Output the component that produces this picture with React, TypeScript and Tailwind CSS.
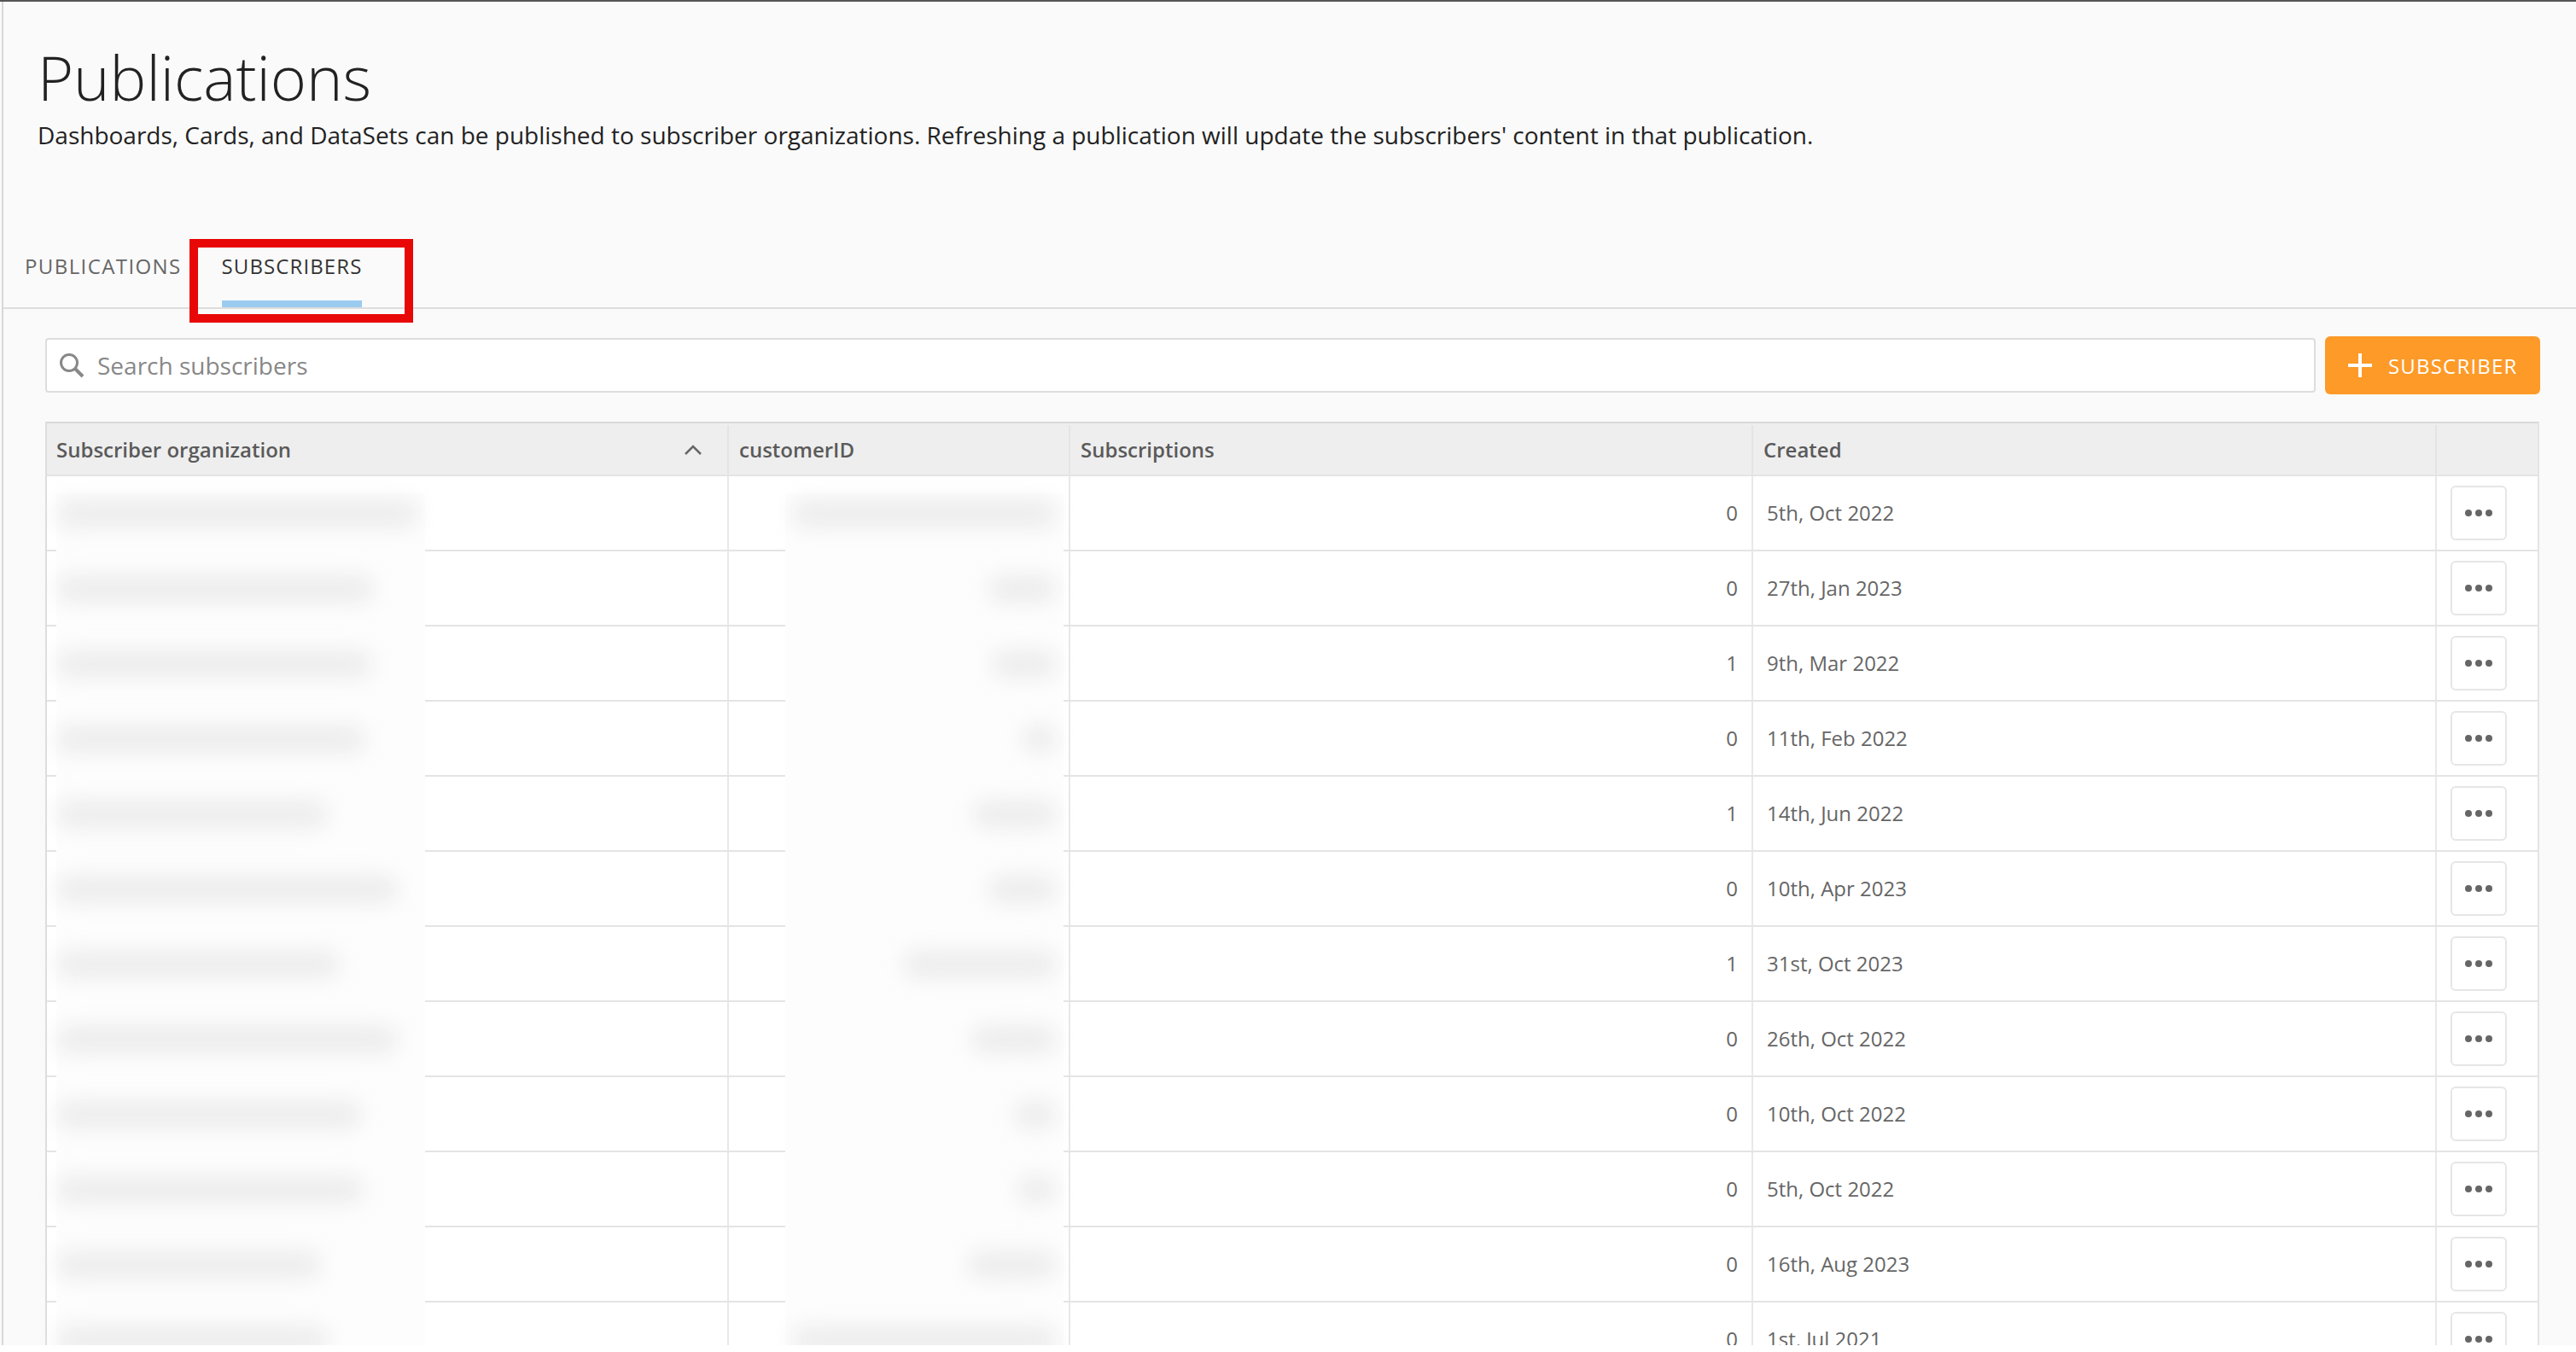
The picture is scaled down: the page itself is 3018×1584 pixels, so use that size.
const rows = [
  { n: 0, d: "5th, Oct 2022", org: 424, id: 310 },
  { n: 0, d: "27th, Jan 2023", org: 372, id: 80 },
  { n: 1, d: "9th, Mar 2022", org: 370, id: 76 },
  { n: 0, d: "11th, Feb 2022", org: 362, id: 40 },
  { n: 1, d: "14th, Jun 2022", org: 318, id: 98 },
  { n: 0, d: "10th, Apr 2023", org: 400, id: 80 },
  { n: 1, d: "31st, Oct 2023", org: 332, id: 180 },
  { n: 0, d: "26th, Oct 2022", org: 400, id: 100 },
  { n: 0, d: "10th, Oct 2022", org: 358, id: 50 },
  { n: 0, d: "5th, Oct 2022", org: 360, id: 46 },
  { n: 0, d: "16th, Aug 2023", org: 310, id: 104 },
  { n: 0, d: "1st, Jul 2021", org: 318, id: 310 },
];

function Row({ n, d }: { n: number; d: string }) {
  return (
    <div className="flex h-[88px] shrink-0 border-b-2 border-[#e4e4e4] bg-white text-[24px] text-[#666]">
      <div className="w-[799px] shrink-0 border-r-2 border-[#e8e8e8]" />
      <div className="w-[400px] shrink-0 border-r-2 border-[#e8e8e8]" />
      <div className="flex w-[800px] shrink-0 items-center justify-end border-r-2 border-[#e8e8e8] pr-[16px]">{n}</div>
      <div className="flex w-[801px] shrink-0 items-center border-r-2 border-[#e8e8e8] pl-[16px]">{d}</div>
      <div className="flex w-[118px] shrink-0 items-center pl-[16px]">
        <button className="flex h-[64px] w-[66px] items-center justify-center gap-[4px] rounded-[6px] border-2 border-[#e6e6e6] bg-white">
          <span className="h-[8px] w-[8px] rounded-full bg-[#666]" />
          <span className="h-[8px] w-[8px] rounded-full bg-[#666]" />
          <span className="h-[8px] w-[8px] rounded-full bg-[#666]" />
        </button>
      </div>
    </div>
  );
}

export default function App() {
  return (
    <div className="h-[1584px] overflow-hidden bg-white font-['Open_Sans',sans-serif]">
      <div className="h-[1576px] overflow-hidden border-t-2 border-t-[#555] bg-[#fafafa]">
        <div className="ml-[2px] h-full border-l-2 border-l-[#d8d8d8]">
          <div className="pl-[40px] pt-[44px]">
            <h1 className="mb-[5px] text-[72px] leading-[88px] font-light text-[#222]">Publications</h1>
            <p className="text-[28px] leading-[38px] text-[#222]">
              Dashboards, Cards, and DataSets can be published to subscriber organizations. Refreshing a publication will update the subscribers' content in that publication.
            </p>
          </div>
          <div className="relative mt-[105px] flex h-[80px] border-b-2 border-[#ddd] text-[24px] font-medium">
            <div className="ml-[25px] pt-[12px] tracking-[1.4px] text-[#666]">PUBLICATIONS</div>
            <div className="ml-[47px] h-[78px] border-b-8 border-[#9ccbf0] pt-[12px] tracking-[1.1px] text-[#333]">SUBSCRIBERS</div>
            <div className="absolute left-[218px] top-[-2px] h-[98px] w-[262px] border-[10px] border-[#e80808]" />
          </div>
          <div className="mt-[32px] flex items-center pl-[49px]">
            <div className="flex h-[64px] w-[2660px] items-center rounded-[4px] border-2 border-[#ddd] bg-white pl-[14px] text-[28px] text-[#888]">
              <svg width="30" height="30" viewBox="0 0 30 30" fill="none" stroke="#888" strokeWidth="3">
                <circle cx="12" cy="12" r="9.5" />
                <path d="M19 19l9 9" strokeWidth="4" />
              </svg>
              <span className="ml-[15px]">Search subscribers</span>
            </div>
            <button className="ml-[11px] flex h-[68px] w-[252px] items-center rounded-[6px] bg-[#fd9a28] pl-[27px] text-[24px] tracking-[1.2px] text-white">
              <svg width="28" height="28" viewBox="0 0 28 28" stroke="#fff" strokeWidth="4">
                <path d="M14 0v28M0 14h28" />
              </svg>
              <span className="ml-[19px] pt-[2px]">SUBSCRIBER</span>
            </button>
          </div>
          <div className="relative ml-[49px] mt-[32px] w-[2922px] border-l-2 border-r-2 border-t-2 border-l-[#ddd] border-r-[#e4e4e4] border-t-[#d8d8d8]">
            <div className="flex h-[62px] border-b-2 border-[#e4e4e4] bg-[#eee] pt-[2px] text-[24px] font-semibold text-[#5a5a5a]">
              <div className="flex w-[799px] shrink-0 items-center justify-between border-r-2 border-[#e4e4e4] pl-[11px] pr-[30px]">
                <span>Subscriber organization</span>
                <svg width="20" height="12" viewBox="0 0 20 12" fill="none" stroke="#666" strokeWidth="2.5">
                  <path d="M1 11l9-9 9 9" />
                </svg>
              </div>
              <div className="flex w-[400px] shrink-0 items-center border-r-2 border-[#e4e4e4] pl-[12px]">customerID</div>
              <div className="flex w-[800px] shrink-0 items-center border-r-2 border-[#e4e4e4] pl-[12px]">Subscriptions</div>
              <div className="flex w-[801px] shrink-0 items-center border-r-2 border-[#e4e4e4] pl-[12px]">Created</div>
              <div className="w-[118px] shrink-0" />
            </div>
            {rows.map((r, i) => (
              <Row key={i} n={r.n} d={r.d} />
            ))}
            <div className="absolute left-[11px] top-[82px] h-[1100px] w-[432px] bg-[#fdfdfd]">
              <div className="-mt-[20px]">
                {rows.map((r, i) => (
                  <div key={i} className="flex h-[88px] items-center">
                    <div className="h-[32px] rounded-full bg-[#ececec] blur-[12px]" style={{ width: r.org }} />
                  </div>
                ))}
              </div>
            </div>
            <div className="absolute left-[865px] top-[82px] h-[1100px] w-[326px] bg-[#fdfdfd]">
              <div className="-mt-[20px] flex flex-col items-end">
                {rows.map((r, i) => (
                  <div key={i} className="flex h-[88px] items-center">
                    <div className="mr-[8px] h-[32px] rounded-full bg-[#ececec] blur-[12px]" style={{ width: r.id }} />
                  </div>
                ))}
              </div>
            </div>
          </div>
        </div>
      </div>
    </div>
  );
}
